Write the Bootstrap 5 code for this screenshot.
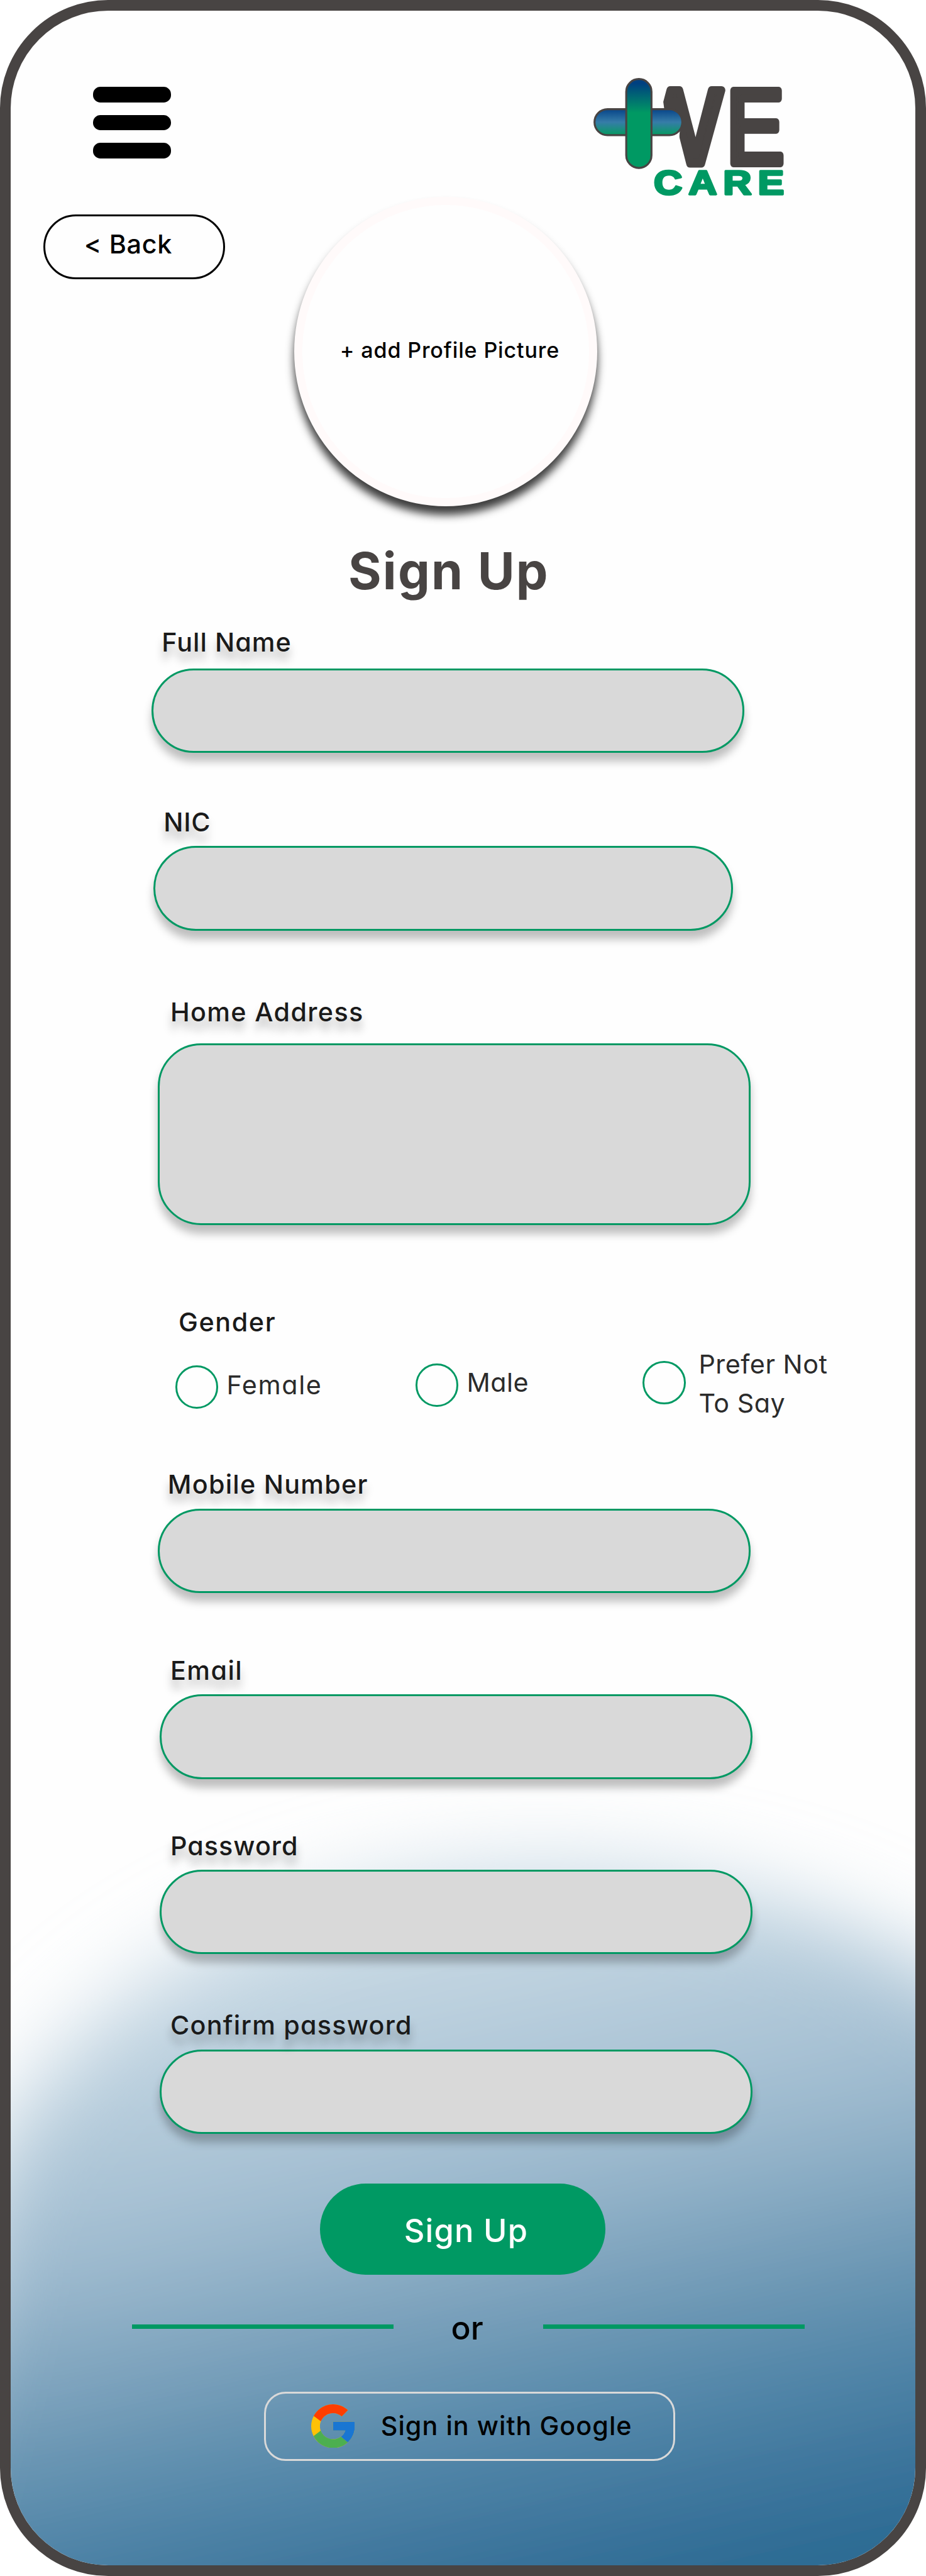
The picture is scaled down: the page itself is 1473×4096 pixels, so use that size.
<!DOCTYPE html>
<html lang="en">
<head>
<meta charset="utf-8">
<meta name="viewport" content="width=device-width, initial-scale=1">
<title>+WE Care – Sign Up</title>
<link href="https://cdn.jsdelivr.net/npm/bootstrap@5.3.0/dist/css/bootstrap.min.css" rel="stylesheet">
<style>
  /* --u is one unit of the 428-unit wide mobile layout */
  :root { --u: 3.4416px; --brand: #009963; --ink: #484443; }
  body { background: #fff; font-family: Inter, "Open Sans", sans-serif; font-feature-settings: "cv11"; color: #1a1a1a; }
  .phone { width: 1473px; height: 4096px; border: calc(5*var(--u)) solid var(--ink); border-radius: calc(50*var(--u)); background: #fefefe; }
  .glow { left: calc(-5*var(--u)); top: calc(-5*var(--u)); width: 1473px; height: 4096px; }
  .topbar { height: calc(86*var(--u)); padding-left: calc(38*var(--u)); padding-right: calc(52.8*var(--u)); }
  .menu-btn { margin-top: calc(35.2*var(--u)); width: calc(36*var(--u)); gap: calc(5.7*var(--u)); }
  .menu-btn span { height: calc(7.2*var(--u)); border-radius: calc(3.4*var(--u)); background: #000; }
  .logo { margin-top: calc(25*var(--u)); width: calc(105*var(--u)); height: calc(61*var(--u)); overflow: visible; }
  .back-btn { margin: calc(8*var(--u)) 0 0 calc(15*var(--u)); width: calc(84*var(--u)); height: calc(30*var(--u)); border: calc(1*var(--u)) solid #000; padding: 0 calc(5.4*var(--u)) calc(2*var(--u)) 0; font-size: calc(12*var(--u)); letter-spacing: calc(.2*var(--u)); font-weight: 500; color: #000; }
  .avatar { margin-left: calc(32*var(--u)); width: calc(140*var(--u)); height: calc(143*var(--u)); border: calc(4*var(--u)) solid #fffafa; background: #fefefe; box-shadow: 0 calc(4*var(--u)) calc(4*var(--u)) rgba(0,0,0,.76); font-size: calc(9.9*var(--u)); letter-spacing: calc(.25*var(--u)); font-weight: 500; color: #000; padding: 0 0 calc(1.6*var(--u)) calc(3.9*var(--u)); }
  .title { margin: calc(14.7*var(--u)) 0 0 calc(156*var(--u)); font-size: calc(23.4*var(--u)); letter-spacing: calc(.65*var(--u)); line-height: calc(30*var(--u)); font-weight: 700; color: var(--ink); }
  .lbl { display: block; width: max-content; margin: 0 0 0 calc(var(--lx)*var(--u)); font-size: calc(12*var(--u)); letter-spacing: calc(var(--ls,.3)*var(--u)); line-height: calc(14*var(--u)); font-weight: 500; text-shadow: 0 calc(4*var(--u)) calc(4*var(--u)) rgba(0,0,0,.27); white-space: nowrap; }
  .field { padding-top: calc(var(--mt)*var(--u)); }
  .box { display: block; margin: calc(var(--gap,4.2)*var(--u)) 0 0 calc(var(--x)*var(--u)); width: calc(var(--w,274)*var(--u)); height: calc(39*var(--u)); min-height: 0; border: calc(1*var(--u)) solid var(--brand); border-radius: calc(20*var(--u)); background: #d9d9d9; box-shadow: 0 calc(4*var(--u)) calc(4*var(--u)) rgba(0,0,0,.25); resize: none; font-size: calc(12*var(--u)); }
  .box-tall { height: calc(84*var(--u)); }
  .f-name { --mt: 11.2; --lx: 69.8; --x: 65; --gap: 5.1; }
  .f-nic { --mt: 24.8; --lx: 70.7; --x: 66; --w: 268; --ls: .2; }
  .f-home { --mt: 30.7; --lx: 73.8; --x: 68; --gap: 7.3; --ls: .39; }
  .f-gender { --mt: 37.8; --lx: 77.6; --ls: .46; }
  .f-gender .lbl { text-shadow: none; }
  .f-mobile { --mt: 21.1; --lx: 72.6; --x: 68; --ls: .36; }
  .f-email { --mt: 28.8; --lx: 73.8; --x: 69; --ls: .42; }
  .f-pass { --mt: 23.8; --lx: 73.8; --x: 69; }
  .f-confirm { --mt: 25.8; --lx: 73.8; --x: 69; --ls: .36; }
  .choices { height: calc(36*var(--u)); margin: calc(3.9*var(--u)) 0 0 calc(76*var(--u)); font-size: calc(12*var(--u)); letter-spacing: calc(.15*var(--u)); line-height: calc(18*var(--u)); color: #2b2b2b; }
  .choice input { appearance: none; flex: none; width: calc(20*var(--u)); height: calc(20*var(--u)); margin: 0; border: calc(1*var(--u)) solid var(--brand); border-radius: 50%; background: #fefefe; }
  .choice span { margin-left: calc(3.8*var(--u)); padding-bottom: calc(1.9*var(--u)); white-space: nowrap; }
  .c-female { width: calc(111*var(--u)); height: calc(20*var(--u)); margin-top: calc(9.3*var(--u)); letter-spacing: calc(.47*var(--u)); }
  .c-male { width: calc(105*var(--u)); height: calc(20*var(--u)); margin-top: calc(8.3*var(--u)); }
  .c-none input { margin-top: calc(-1.4*var(--u)); }
  .c-none span { margin-left: calc(6*var(--u)); padding: 0; }
  .submit-btn { margin: calc(23*var(--u)) 0 0 calc(143*var(--u)); width: calc(132*var(--u)); height: calc(42*var(--u)); border: 0; background: var(--brand); color: #fff; font-size: calc(14.7*var(--u)); letter-spacing: calc(.33*var(--u)); font-weight: 500; padding: calc(1.5*var(--u)) 0 0 calc(3*var(--u)); }
  .divider { margin: calc(15*var(--u)) 0 0 calc(56*var(--u)); width: calc(311*var(--u)); height: calc(18*var(--u)); font-size: calc(15*var(--u)); line-height: calc(18*var(--u)); font-weight: 500; color: #000; }
  .divider i { width: calc(121*var(--u)); height: calc(2*var(--u)); background: var(--brand); }
  .divider span { padding-top: calc(1.6*var(--u)); margin-right: calc(1*var(--u)); }
  .google-btn { margin: calc(21*var(--u)) 0 0 calc(117*var(--u)); width: calc(190*var(--u)); height: calc(32*var(--u)); border: calc(1*var(--u)) solid #d9d9d9; border-radius: calc(10*var(--u)); padding: 0 0 0 calc(21*var(--u)); font-size: calc(12*var(--u)); letter-spacing: calc(.3*var(--u)); font-weight: 500; color: #000; }
  .google-btn svg { width: calc(20.2*var(--u)); height: calc(20.2*var(--u)); margin-right: calc(12*var(--u)); }
</style>
</head>
<body>
<main class="phone position-relative overflow-hidden">
  <svg class="glow position-absolute" viewBox="0 0 1712 4760" preserveAspectRatio="none" aria-hidden="true">
    <defs>
      <linearGradient id="sea" gradientUnits="userSpaceOnUse" x1="0" y1="3450" x2="346" y2="5024">
        <stop offset="0" stop-color="#d8e5ed"/><stop offset=".196" stop-color="#c5d7e3"/><stop offset=".456" stop-color="#a0bcd0"/>
        <stop offset=".663" stop-color="#6c97b4"/><stop offset=".76" stop-color="#5287a9"/><stop offset=".892" stop-color="#3b739b"/><stop offset=".963" stop-color="#2a6b93"/>
      </linearGradient>
      <filter id="soft" filterUnits="userSpaceOnUse" x="-600" y="3000" width="2900" height="2400"><feGaussianBlur stdDeviation="80"/></filter>
    </defs>
    <path d="M-300 5200L-60 4220A1060 770 0 0 1 1000 3450A1150 860 0 0 1 2150 4310V5200Z" fill="url(#sea)" filter="url(#soft)"/>
  </svg>

  <div class="position-relative">
    <header class="topbar d-flex justify-content-between align-items-start">
      <button type="button" class="menu-btn btn p-0 border-0 d-flex flex-column align-items-stretch" aria-label="Menu"><span></span><span></span><span></span></button>
      <svg class="logo" viewBox="0 0 1260 732" role="img" aria-label="+WE Care">
        <defs>
          <linearGradient id="barV" x1="0" y1="0" x2="0" y2="1"><stop offset=".05" stop-color="#004080"/><stop offset=".38" stop-color="#009963"/></linearGradient>
          <linearGradient id="barH" x1="0" y1="0" x2="0" y2="1"><stop offset=".05" stop-color="#0c4a8c"/><stop offset=".5" stop-color="#367ca8"/><stop offset=".95" stop-color="#0a9868"/></linearGradient>
        </defs>
        <g font-family="Liberation Sans, sans-serif" fill="#484443" stroke="#484443" stroke-linejoin="round">
          <text transform="translate(298 547) scale(.94 1)" font-size="588" stroke-width="46">W</text>
          <text transform="translate(845 547) scale(.82 1)" font-size="588" stroke-width="42">E</text>
        </g>
        <path d="M270 90H480L500 240V330H590L570 580H270Z" fill="#fefefe"/>
        <rect x="114" y="246" width="487" height="144" rx="72" fill="url(#barH)" stroke="#484443" stroke-width="11"/>
        <rect x="290" y="79" width="140" height="493" rx="70" fill="url(#barV)" stroke="#484443" stroke-width="11"/>
        <text transform="translate(443 718) scale(1.15 1)" font-family="Liberation Sans, sans-serif" font-weight="700" font-size="190" letter-spacing="30" fill="#009963" stroke="#009963" stroke-width="12" stroke-linejoin="round">CARE</text>
      </svg>
    </header>

    <div class="d-flex align-items-start">
      <button type="button" class="back-btn btn rounded-pill">&lt; Back</button>
      <button type="button" class="avatar btn rounded-circle text-nowrap">+ add Profile Picture</button>
    </div>

    <h1 class="title">Sign Up</h1>

    <form>
      <div class="field f-name"><label class="lbl" for="name">Full Name</label><input id="name" class="box form-control"></div>
      <div class="field f-nic"><label class="lbl" for="nic">NIC</label><input id="nic" class="box form-control"></div>
      <div class="field f-home"><label class="lbl" for="home">Home Address</label><textarea id="home" class="box box-tall form-control"></textarea></div>
      <div class="field f-gender">
        <span class="lbl">Gender</span>
        <div class="choices d-flex align-items-start">
          <label class="choice c-female d-flex align-items-center"><input type="radio" name="g"><span>Female</span></label>
          <label class="choice c-male d-flex align-items-center"><input type="radio" name="g"><span>Male</span></label>
          <label class="choice c-none d-flex align-items-center"><input type="radio" name="g"><span>Prefer Not<br>To Say</span></label>
        </div>
      </div>
      <div class="field f-mobile"><label class="lbl" for="mobile">Mobile Number</label><input id="mobile" class="box form-control"></div>
      <div class="field f-email"><label class="lbl" for="email">Email</label><input id="email" class="box form-control"></div>
      <div class="field f-pass"><label class="lbl" for="pass">Password</label><input id="pass" type="password" class="box form-control"></div>
      <div class="field f-confirm"><label class="lbl" for="confirm">Confirm password</label><input id="confirm" type="password" class="box form-control"></div>

      <button type="button" class="submit-btn btn rounded-pill d-block">Sign Up</button>
      <div class="divider d-flex align-items-center justify-content-between"><i></i><span>or</span><i></i></div>
      <button type="button" class="google-btn btn d-flex align-items-center text-nowrap">
        <svg viewBox="4 4 40 40" aria-hidden="true">
          <path fill="#FFC107" d="M43.611 20.083H42V20H24v8h11.303C33.654 32.657 29.223 36 24 36c-6.627 0-12-5.373-12-12s5.373-12 12-12c3.059 0 5.842 1.154 7.961 3.039l5.657-5.657C34.046 6.053 29.268 4 24 4 12.955 4 4 12.955 4 24s8.955 20 20 20 20-8.955 20-20c0-1.341-.138-2.65-.389-3.917z"/>
          <path fill="#FF3D00" d="M6.306 14.691l6.571 4.819C14.655 15.108 18.961 12 24 12c3.059 0 5.842 1.154 7.961 3.039l5.657-5.657C34.046 6.053 29.268 4 24 4 16.318 4 9.656 8.337 6.306 14.691z"/>
          <path fill="#4CAF50" d="M24 44c5.166 0 9.86-1.977 13.409-5.192l-6.19-5.238C29.211 35.091 26.715 36 24 36c-5.202 0-9.619-3.317-11.283-7.946l-6.522 5.025C9.505 39.556 16.227 44 24 44z"/>
          <path fill="#1976D2" d="M43.611 20.083H42V20H24v8h11.303c-.792 2.237-2.231 4.166-4.087 5.571l6.193 5.238C36.971 39.205 44 34 44 24c0-1.341-.138-2.65-.389-3.917z"/>
        </svg>
        <span>Sign in with Google</span>
      </button>
    </form>
  </div>
</main>
<script src="https://cdn.jsdelivr.net/npm/bootstrap@5.3.0/dist/js/bootstrap.bundle.min.js"></script>
</body>
</html>
